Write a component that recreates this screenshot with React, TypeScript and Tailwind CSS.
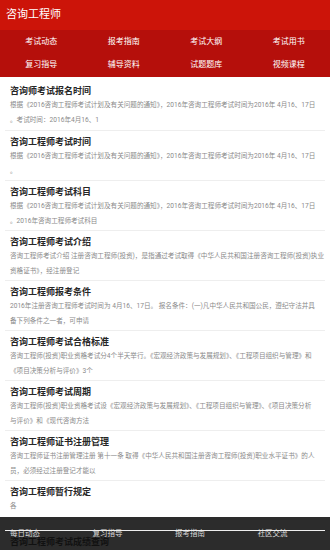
import React from "react";

const navItems = ["考试动态", "报考指南", "考试大纲", "考试用书", "复习指导", "辅导资料", "试题题库", "视频课程"];

const L1 = "根据《2016咨询工程师考试计划及有关问题的通知》，2016年咨询工程师考试时间为2016年 4月16、17日";

const items: { title: string; lines: string[] }[] = [
  { title: "咨询师考试报名时间", lines: [L1, "。考试时间：2016年4月16、1"] },
  { title: "咨询工程师考试时间", lines: [L1, "。"] },
  { title: "咨询工程师考试科目", lines: [L1, "。2016年咨询工程师考试科目"] },
  {
    title: "咨询工程师考试介绍",
    lines: [
      "咨询工程师考试介绍 注册咨询工程师(投资)，是指通过考试取得《中华人民共和国注册咨询工程师(投资)执业",
      "资格证书》，经注册登记",
    ],
  },
  {
    title: "咨询工程师报考条件",
    lines: [
      "2016年注册咨询工程师考试时间为 4月16、17日。 报名条件：(一)凡中华人民共和国公民，遵纪守法并具",
      "备下列条件之一者，可申请",
    ],
  },
  {
    title: "咨询工程师考试合格标准",
    lines: [
      "咨询工程师(投资)职业资格考试分4个半天举行。《宏观经济政策与发展规划》、《工程项目组织与管理》和",
      "《项目决策分析与评价》3个",
    ],
  },
  {
    title: "咨询工程师考试周期",
    lines: [
      "咨询工程师(投资)职业资格考试设《宏观经济政策与发展规划》、《工程项目组织与管理》、《项目决策分析",
      "与评价》和《现代咨询方法",
    ],
  },
  {
    title: "咨询工程师证书注册管理",
    lines: [
      "咨询工程师证书注册管理注册 第十一条 取得《中华人民共和国注册咨询工程师(投资)职业水平证书》的人",
      "员，必须经过注册登记才能以",
    ],
  },
  { title: "咨询工程师暂行规定", lines: ["各", ""] },
  { title: "咨询工程师考试成绩查询", lines: ["", ""] },
];

const bottom = ["每日动态", "复习指导", "报考指南", "社区交流"];

export default function App() {
  return (
    <div
      className="relative h-[550px] w-[330px] overflow-hidden bg-white"
      style={{ fontFamily: 'Roboto, "Noto Sans CJK SC", sans-serif' }}
    >
      <div className="flex h-[30px] items-center bg-[#cc1409] pl-[6px] text-[11px] text-white">咨询工程师</div>
      <div className="grid h-[47px] grid-cols-4 bg-[#b50f0b]">
        {navItems.map((n) => (
          <div key={n} className="flex items-center justify-center text-[8px] text-white">
            {n}
          </div>
        ))}
      </div>
      <div className="absolute bottom-0 left-0 grid h-[33px] w-full grid-cols-4 bg-[#2c2c2c]">
        {bottom.map((b) => (
          <div key={b} className="flex items-center pl-[10px] text-[7.5px] text-[#d8d8d8]">
            {b}
          </div>
        ))}
      </div>
      <div className="relative z-10 pt-[3px]">
        {items.map((it, i) => (
          <div key={i} className={`mx-[5px] h-[50px] px-[5px] pt-[4px] ${i > 0 ? "border-t border-[#eeeeee]" : ""}`}>
            <div
              className={`h-[14px] whitespace-nowrap text-[9px] leading-[14px] font-bold ${
                i === items.length - 1 ? "text-[#111111]" : "text-[#262626]"
              }`}
            >
              {it.title}
            </div>
            {it.lines.map((l, j) => (
              <div key={j} className="h-[15px] whitespace-nowrap text-[6.6px] leading-[15px] text-[#8a8a8a]">
                {l}
              </div>
            ))}
          </div>
        ))}
      </div>
    </div>
  );
}
